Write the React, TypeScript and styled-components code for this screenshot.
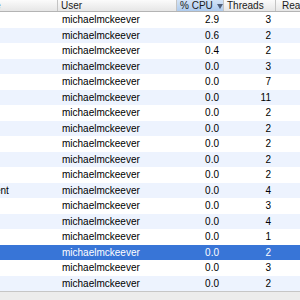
import React from "react";
import styled, { createGlobalStyle } from "styled-components";

const Global = createGlobalStyle`
  html, body { margin: 0; padding: 0; background: #fff; overflow: hidden; }
  body { font-family: "Liberation Sans", Arial, sans-serif; }
`;

const COLS = "126px 119px 47px 52px 90px";

const Window = styled.div`
  width: 300px;
  height: 300px;
  display: flex;
  flex-direction: column;
  overflow: hidden;
  background: #fff;
`;

const Viewport = styled.div`
  flex: 1;
  overflow: hidden;
`;

const Table = styled.div`
  margin-left: -68px;
  width: 434px;
  display: flex;
  flex-direction: column;
`;

const HeaderRow = styled.div`
  display: grid;
  grid-template-columns: ${COLS};
  height: 11px;
  border-bottom: 1px solid #b4b4b4;
  background: linear-gradient(#fbfbfb, #e6e6e6);
`;

const HeaderCell = styled.div<{ $sorted?: boolean; $pad?: number }>`
  display: flex;
  align-items: center;
  gap: 4px;
  padding-left: ${(p) => p.$pad ?? 3}px;
  font-size: 10px;
  line-height: 11px;
  color: #1a1a1a;
  border-right: 1px solid #c4c4c4;
  white-space: nowrap;
  overflow: hidden;
  background: ${(p) =>
    p.$sorted ? "linear-gradient(#d4e4f7, #aecbee)" : "transparent"};
`;

const SortArrow = styled.span`
  width: 0;
  height: 0;
  border-left: 3px solid transparent;
  border-right: 3px solid transparent;
  border-top: 5px solid #51607a;
  margin-top: 1px;
`;

const Row = styled.div<{ $alt?: boolean; $selected?: boolean }>`
  display: grid;
  grid-template-columns: ${COLS};
  height: 15.5px;
  align-items: center;
  font-size: 10px;
  color: ${(p) => (p.$selected ? "#fff" : "#000")};
  background: ${(p) =>
    p.$selected ? "#3875d7" : p.$alt ? "#edf3fe" : "#ffffff"};
`;

const Cell = styled.div<{ $num?: boolean }>`
  padding: ${(p) => (p.$num ? "0 5px 0 0" : "0 0 0 4px")};
  text-align: ${(p) => (p.$num ? "right" : "left")};
  white-space: nowrap;
  overflow: hidden;
`;

const Footer = styled.div`
  height: 8px;
  border-top: 1px solid #c6c6c6;
  background: #ececec;
`;

type Proc = { name: string; cpu: string; threads: number };

const rows: Proc[] = [
  { name: "Activity Monitor", cpu: "2.9", threads: 3 },
  { name: "SystemUIServer", cpu: "0.6", threads: 2 },
  { name: "Finder", cpu: "0.4", threads: 2 },
  { name: "Dock", cpu: "0.0", threads: 3 },
  { name: "Safari", cpu: "0.0", threads: 7 },
  { name: "Mail", cpu: "0.0", threads: 11 },
  { name: "pboard", cpu: "0.0", threads: 2 },
  { name: "Spotlight", cpu: "0.0", threads: 2 },
  { name: "AppleSpell", cpu: "0.0", threads: 2 },
  { name: "iTunesHelper", cpu: "0.0", threads: 2 },
  { name: "quicklookd", cpu: "0.0", threads: 2 },
  { name: "UserEventAgent", cpu: "0.0", threads: 4 },
  { name: "Terminal", cpu: "0.0", threads: 3 },
  { name: "TextEdit", cpu: "0.0", threads: 4 },
  { name: "bash", cpu: "0.0", threads: 1 },
  { name: "Preview", cpu: "0.0", threads: 2 },
  { name: "iCal", cpu: "0.0", threads: 3 },
  { name: "Address Book", cpu: "0.0", threads: 2 },
];

export default function App() {
  return (
    <Window>
      <Global />
      <Viewport>
        <Table>
          <HeaderRow>
            <HeaderCell>Process Name</HeaderCell>
            <HeaderCell>User</HeaderCell>
            <HeaderCell $sorted>
              % CPU
              <SortArrow />
            </HeaderCell>
            <HeaderCell>Threads</HeaderCell>
            <HeaderCell $pad={6}>Real Memory</HeaderCell>
          </HeaderRow>
          {rows.map((r, i) => (
            <Row key={i} $alt={i % 2 === 1} $selected={i === 15}>
              <Cell>{r.name === "UserEventAgent" ? r.name : ""}</Cell>
              <Cell>michaelmckeever</Cell>
              <Cell $num>{r.cpu}</Cell>
              <Cell $num>{r.threads}</Cell>
              <Cell $num></Cell>
            </Row>
          ))}
        </Table>
      </Viewport>
      <Footer />
    </Window>
  );
}
